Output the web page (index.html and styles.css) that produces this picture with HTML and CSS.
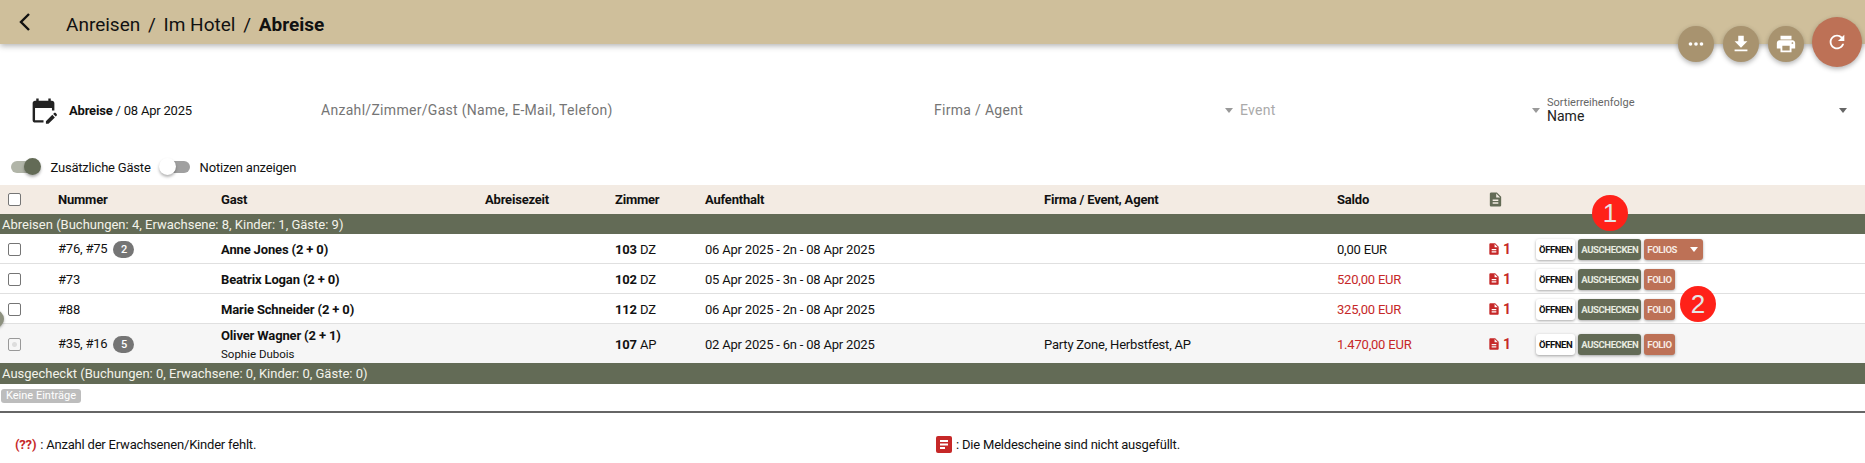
FILE: index.html
```html
<!DOCTYPE html>
<html lang="de">
<head>
  <meta charset="UTF-8" />
  <title>Abreise</title>
  <link rel="stylesheet" href="styles.css">
</head>
<body>
  <header class="appbar">
    <svg class="back-icon" viewBox="0 0 16 24"><polyline points="12,4 4,12 12,20"/></svg>
    <h1 class="page-title">Anreisen<span class="crumb-sep">/</span>Im Hotel<span class="crumb-sep">/</span><b>Abreise</b></h1>
  </header>

  <div class="fab-group">
    <button class="fab"><svg viewBox="0 0 24 24"><circle cx="6" cy="12" r="2"/><circle cx="12" cy="12" r="2"/><circle cx="18" cy="12" r="2"/></svg></button>
    <button class="fab"><svg viewBox="0 0 24 24"><path d="M19 9h-4V3H9v6H5l7 7 7-7zM5 18v2h14v-2H5z"/></svg></button>
    <button class="fab"><svg viewBox="0 0 24 24"><path d="M19 8H5c-1.66 0-3 1.34-3 3v6h4v4h12v-4h4v-6c0-1.66-1.34-3-3-3zm-3 11H8v-5h8v5zm3-7c-.55 0-1-.45-1-1s.45-1 1-1 1 .45 1 1-.45 1-1 1zm-1-9H6v4h12V3z"/></svg></button>
    <button class="fab fab-big"><svg viewBox="0 0 24 24"><path d="M17.65 6.35C16.2 4.9 14.21 4 12 4c-4.42 0-7.99 3.58-7.99 8s3.57 8 7.99 8c3.73 0 6.84-2.55 7.73-6h-2.08c-.82 2.33-3.04 4-5.65 4-3.31 0-6-2.69-6-6s2.69-6 6-6c1.66 0 3.14.69 4.22 1.78L13 11h7V4l-2.35 2.35z"/></svg></button>
  </div>

  <section class="filters">
    <div class="date-field">
      <svg class="calendar-icon" viewBox="0 0 24 24"><path d="M5 10h14v2h2V6c0-1.1-.9-2-2-2h-1V2h-2v2H8V2H6v2H5c-1.11 0-1.99.9-1.99 2L3 20c0 1.1.89 2 2 2h7v-2H5V10z"/><path d="M22.84 16.28l-.71.71-2.12-2.12.71-.71c.39-.39 1.02-.39 1.41 0l.71.71c.39.39.39 1.02 0 1.41zm-3.54-.7l2.12 2.12-5.3 5.3H14v-2.12l5.3-5.3z"/></svg>
      <span><b>Abreise</b> / 08 Apr 2025</span>
    </div>
    <div class="field placeholder">Anzahl/Zimmer/Gast (Name, E-Mail, Telefon)</div>
    <div class="field placeholder">Firma / Agent<i class="caret"></i></div>
    <div class="field placeholder faded">Event<i class="caret"></i></div>
    <div class="field sort-field">
      <div class="sort-value"><small>Sortierreihenfolge</small>Name</div>
      <i class="caret dark"></i>
    </div>
  </section>

  <section class="toggles">
    <span class="toggle on"><i></i></span><label class="toggle-label">Zusätzliche Gäste</label>
    <span class="toggle off"><i></i></span><label class="toggle-label">Notizen anzeigen</label>
  </section>

  <table class="bookings">
    <colgroup>
      <col class="c-check"><col class="c-num"><col class="c-guest"><col class="c-time"><col class="c-room">
      <col class="c-stay"><col class="c-firm"><col class="c-saldo"><col class="c-doc"><col>
    </colgroup>
    <thead>
      <tr>
        <th><span class="checkbox"></span></th>
        <th>Nummer</th>
        <th>Gast</th>
        <th>Abreisezeit</th>
        <th>Zimmer</th>
        <th>Aufenthalt</th>
        <th>Firma / Event, Agent</th>
        <th>Saldo</th>
        <th><svg class="doc-icon olive" viewBox="0 0 24 24"><path d="M14 2H6c-1.1 0-1.99.9-1.99 2L4 20c0 1.1.89 2 2 2h12c1.1 0 2-.9 2-2V8l-6-6zm2 16H8v-2h8v2zm0-4H8v-2h8v2zm-3-5V3.5L18.5 9H13z"/></svg></th>
        <th></th>
      </tr>
    </thead>
    <tbody>
      <tr class="group-row"><td colspan="10">Abreisen (Buchungen: 4, Erwachsene: 8, Kinder: 1, Gäste: 9)</td></tr>
      <tr class="row-a">
        <td><span class="checkbox"></span></td>
        <td>#76, #75 <span class="count-badge">2</span></td>
        <td><b>Anne Jones (2 + 0)</b></td>
        <td></td>
        <td><b>103</b> DZ</td>
        <td>06 Apr 2025 - 2n - 08 Apr 2025</td>
        <td></td>
        <td>0,00 EUR</td>
        <td><span class="doc-count"><svg class="doc-icon" viewBox="0 0 24 24"><path d="M14 2H6c-1.1 0-1.99.9-1.99 2L4 20c0 1.1.89 2 2 2h12c1.1 0 2-.9 2-2V8l-6-6zm2 16H8v-2h8v2zm0-4H8v-2h8v2zm-3-5V3.5L18.5 9H13z"/></svg>1</span></td>
        <td class="actions"><button class="btn btn-white">Öffnen</button><button class="btn btn-olive">Auschecken</button><button class="btn btn-rust btn-folios">Folios<i class="caret white"></i></button></td>
      </tr>
      <tr class="row-a">
        <td><span class="checkbox"></span></td>
        <td>#73</td>
        <td><b>Beatrix Logan (2 + 0)</b></td>
        <td></td>
        <td><b>102</b> DZ</td>
        <td>05 Apr 2025 - 3n - 08 Apr 2025</td>
        <td></td>
        <td class="due">520,00 EUR</td>
        <td><span class="doc-count"><svg class="doc-icon" viewBox="0 0 24 24"><path d="M14 2H6c-1.1 0-1.99.9-1.99 2L4 20c0 1.1.89 2 2 2h12c1.1 0 2-.9 2-2V8l-6-6zm2 16H8v-2h8v2zm0-4H8v-2h8v2zm-3-5V3.5L18.5 9H13z"/></svg>1</span></td>
        <td class="actions"><button class="btn btn-white">Öffnen</button><button class="btn btn-olive">Auschecken</button><button class="btn btn-rust">Folio</button></td>
      </tr>
      <tr class="row-a">
        <td><span class="checkbox"></span></td>
        <td>#88</td>
        <td><b>Marie Schneider (2 + 0)</b></td>
        <td></td>
        <td><b>112</b> DZ</td>
        <td>06 Apr 2025 - 2n - 08 Apr 2025</td>
        <td></td>
        <td class="due">325,00 EUR</td>
        <td><span class="doc-count"><svg class="doc-icon" viewBox="0 0 24 24"><path d="M14 2H6c-1.1 0-1.99.9-1.99 2L4 20c0 1.1.89 2 2 2h12c1.1 0 2-.9 2-2V8l-6-6zm2 16H8v-2h8v2zm0-4H8v-2h8v2zm-3-5V3.5L18.5 9H13z"/></svg>1</span></td>
        <td class="actions"><button class="btn btn-white">Öffnen</button><button class="btn btn-olive">Auschecken</button><button class="btn btn-rust">Folio</button></td>
      </tr>
      <tr class="row-tall">
        <td><span class="checkbox hover"></span></td>
        <td>#35, #16 <span class="count-badge">5</span></td>
        <td><b class="guest-name">Oliver Wagner (2 + 1)</b><span class="guest-extra">Sophie Dubois</span></td>
        <td></td>
        <td><b>107</b> AP</td>
        <td>02 Apr 2025 - 6n - 08 Apr 2025</td>
        <td>Party Zone, Herbstfest, AP</td>
        <td class="due">1.470,00 EUR</td>
        <td><span class="doc-count"><svg class="doc-icon" viewBox="0 0 24 24"><path d="M14 2H6c-1.1 0-1.99.9-1.99 2L4 20c0 1.1.89 2 2 2h12c1.1 0 2-.9 2-2V8l-6-6zm2 16H8v-2h8v2zm0-4H8v-2h8v2zm-3-5V3.5L18.5 9H13z"/></svg>1</span></td>
        <td class="actions"><button class="btn btn-white">Öffnen</button><button class="btn btn-olive">Auschecken</button><button class="btn btn-rust">Folio</button></td>
      </tr>
      <tr class="group-row group-second"><td colspan="10">Ausgecheckt (Buchungen: 0, Erwachsene: 0, Kinder: 0, Gäste: 0)</td></tr>
      <tr class="empty-row"><td colspan="10"><span class="empty-chip">Keine Einträge</span></td></tr>
    </tbody>
  </table>

  <footer class="legend">
    <div class="legend-item"><span class="missing">(??)</span> : Anzahl der Erwachsenen/Kinder fehlt.</div>
    <div class="legend-item">
      <svg class="legend-icon" viewBox="0 0 16 17"><rect width="16" height="17" rx="2"/><path d="M4 4h8v2H4zM4 7.5h8v2H4zM4 11h5v2H4z"/></svg>
      : Die Meldescheine sind nicht ausgefüllt.
    </div>
  </footer>

  <!-- things floating over the page -->
  <span class="side-handle"></span>
  <span class="marker marker-one">1</span>
  <span class="marker marker-two">2</span>
</body>
</html>
```

FILE: styles.css
```css
body {
  font-family: Roboto, sans-serif;
  font-size: 13px;
  color: #111;
  background: #fff;
  margin: 0;
  padding: 0;
  overflow: hidden;
}

.appbar {
  height: 44px;
  background: #cfbf9b;
  box-shadow: 0 2px 6px rgba(0, 0, 0, 0.3);
  display: flex;
  align-items: center;
  padding-left: 17px;
}

.back-icon {
  width: 16px;
  height: 24px;
  fill: none;
  stroke: #111;
  stroke-width: 2.4;
}

.page-title {
  margin: 4px 0 0 33px;
  font-size: 19px;
  font-weight: 400;
}

.crumb-sep {
  margin: 0 7.75px;
}

.fab-group {
  position: absolute;
  top: 17px;
  right: 3px;
  display: flex;
  align-items: flex-start;
  gap: 9px;
}

.fab {
  width: 36px;
  height: 36px;
  margin-top: 9px;
  padding: 0;
  border: none;
  border-radius: 50%;
  background: #a8936f;
  box-shadow: 0 2px 5px rgba(0, 0, 0, 0.3);
  display: flex;
  align-items: center;
  justify-content: center;
}

.fab svg {
  width: 22px;
  height: 22px;
  fill: #fff;
}

.fab-big {
  width: 50px;
  height: 50px;
  margin-top: 0;
  margin-left: -1px;
  background: #bd7156;
}

.filters {
  margin-top: 47px;
  height: 38px;
  display: grid;
  grid-template-columns: 321px 613px 306px 307px 301px;
  align-items: center;
}

.date-field {
  display: flex;
  align-items: center;
  gap: 11px;
  padding-left: 29px;
  font-size: 13px;
  letter-spacing: -0.2px;
}

.calendar-icon {
  width: 29px;
  height: 29px;
  fill: #222;
}

.field {
  display: flex;
  align-items: center;
  justify-content: space-between;
  font-size: 14px;
  padding-right: 7px;
}

.placeholder {
  color: #757575;
  letter-spacing: 0.3px;
}

.faded {
  color: #aaa;
}

.sort-field {
  padding-right: 1.5px;
}

.sort-value {
  color: #222;
  line-height: 15px;
}

.sort-value small {
  display: block;
  font-size: 11px;
  line-height: 13px;
  color: #666;
}

.caret {
  display: inline-block;
  width: 0;
  height: 0;
  border-left: 4.5px solid transparent;
  border-right: 4.5px solid transparent;
  border-top: 5px solid #999;
}

.caret.dark {
  border-top-color: #666;
}

.caret.white {
  border-top-color: #fff;
}

.toggles {
  margin-top: 26px;
  height: 24px;
  display: flex;
  align-items: center;
}

.toggle {
  position: relative;
  display: block;
  height: 12px;
  border-radius: 6px;
}

.toggle i {
  position: absolute;
  top: -3px;
  width: 17px;
  height: 17px;
  border-radius: 50%;
  box-shadow: 0 2px 3px rgba(0, 0, 0, 0.3);
}

.toggle.on {
  width: 27px;
  margin-left: 11px;
  background: #b1b5a8;
}

.toggle.on i {
  right: -3px;
  background: #636b56;
}

.toggle.off {
  width: 30px;
  margin-left: 9px;
  background: #a0a0a0;
}

.toggle.off i {
  left: -1px;
  background: #fff;
}

.toggle-label {
  margin-left: 12.5px;
  font-size: 13px;
  letter-spacing: -0.2px;
}

.toggle.off + .toggle-label {
  margin-left: 10px;
}

.bookings {
  margin-top: 6px;
  width: 100%;
  border-collapse: collapse;
  table-layout: fixed;
}

.c-check { width: 58px; }
.c-num { width: 163px; }
.c-guest { width: 264px; }
.c-time { width: 130px; }
.c-room { width: 90px; }
.c-stay { width: 339px; }
.c-firm { width: 293px; }
.c-saldo { width: 152px; }
.c-doc { width: 47px; }

.bookings th {
  height: 29px;
  padding: 0;
  background: #f3ebe3;
  font-weight: 700;
  text-align: left;
  font-size: 13px;
  letter-spacing: -0.2px;
}

.bookings td {
  padding: 1px 0 0;
  border-bottom: 1px solid #e0e0e0;
  font-size: 13px;
  letter-spacing: -0.2px;
}

.bookings td b {
  letter-spacing: -0.15px;
}

.checkbox {
  display: block;
  width: 11px;
  height: 11px;
  margin-left: 8px;
  border: 1px solid #757575;
  border-radius: 2px;
  background: #fff;
}

.checkbox.hover {
  border-color: #999;
  background: radial-gradient(circle, #ddd 0 2px, #f6f6f6 3px);
}

.bookings .group-row td {
  height: 20px;
  padding: 0 0 0 2px;
  background: #636b56;
  color: #f3f3ea;
  border-bottom: none;
  letter-spacing: 0;
}

.bookings .group-second td {
  height: 21px;
}

.row-a td {
  height: 28px;
}

.row-tall td {
  height: 38px;
  background: #f6f6f6;
}

.bookings .row-tall td {
  border-bottom: none;
}

.count-badge {
  display: inline-block;
  width: 21px;
  height: 17px;
  margin-left: 3px;
  border-radius: 9px;
  background: #757575;
  color: #fff;
  font-size: 11px;
  font-weight: 500;
  line-height: 17px;
  text-align: center;
}

.guest-name {
  display: block;
  line-height: 20px;
}

.guest-extra {
  display: block;
  font-size: 11.5px;
  line-height: 16px;
  letter-spacing: 0;
}

.due {
  color: #c62828;
}

.doc-icon {
  display: block;
  width: 14px;
  height: 14px;
  margin-left: -2px;
  fill: #c62828;
}

.doc-icon.olive {
  width: 17px;
  height: 17px;
  fill: #636b56;
}

.doc-count {
  display: flex;
  align-items: center;
  gap: 2px;
  color: #c62828;
  font-size: 14px;
  font-weight: 700;
}

.actions {
  white-space: nowrap;
}

.btn {
  height: 21px;
  margin-right: 3px;
  padding: 0 3px;
  border: none;
  border-radius: 3px;
  font-family: Roboto, sans-serif;
  font-size: 9.5px;
  font-weight: 700;
  letter-spacing: -0.4px;
  text-transform: uppercase;
  vertical-align: middle;
  box-shadow: 0 1px 3px rgba(0, 0, 0, 0.35);
}

.btn-white {
  background: #fff;
  color: #111;
}

.btn-olive {
  background: #636b56;
  color: #e8ebe0;
}

.btn-rust {
  background: #bd7156;
  color: #f7ebe4;
}

.btn-folios .caret {
  margin-left: 13px;
  margin-right: 2px;
  vertical-align: middle;
}

.bookings .empty-row td {
  height: 22px;
  padding: 5px 0 0 1px;
  vertical-align: top;
  border-bottom: 2px solid #666;
}

.empty-chip {
  display: block;
  width: max-content;
  padding: 0 5px;
  border-radius: 3px;
  background: #bdbdbd;
  color: #fff;
  font-size: 11px;
  line-height: 14px;
  letter-spacing: 0;
}

.legend {
  margin-top: 22px;
  display: grid;
  grid-template-columns: 936px 1fr;
  font-size: 13px;
  letter-spacing: -0.2px;
}

.legend-item {
  display: flex;
  align-items: center;
  gap: 4px;
  height: 18px;
}

.legend-item:first-child {
  padding-left: 15px;
}

.missing {
  color: #c62828;
  font-weight: 700;
}

.legend-icon {
  width: 16px;
  height: 17px;
  fill: #c62828;
}

.legend-icon path {
  fill: #fff;
}

.side-handle {
  position: absolute;
  left: -14px;
  top: 310px;
  width: 18px;
  height: 18px;
  border-radius: 50%;
  background: #8d917f;
  box-shadow: 0 1px 3px rgba(0, 0, 0, 0.3);
}

.marker {
  position: absolute;
  width: 36px;
  height: 36px;
  border-radius: 50%;
  background: #ff2119;
  color: #e6e6e6;
  font-family: "Liberation Sans", Arial, sans-serif;
  font-size: 26px;
  line-height: 36px;
  text-align: center;
}

.marker-one {
  left: 1592px;
  top: 195px;
}

.marker-two {
  left: 1680px;
  top: 286px;
}
```
